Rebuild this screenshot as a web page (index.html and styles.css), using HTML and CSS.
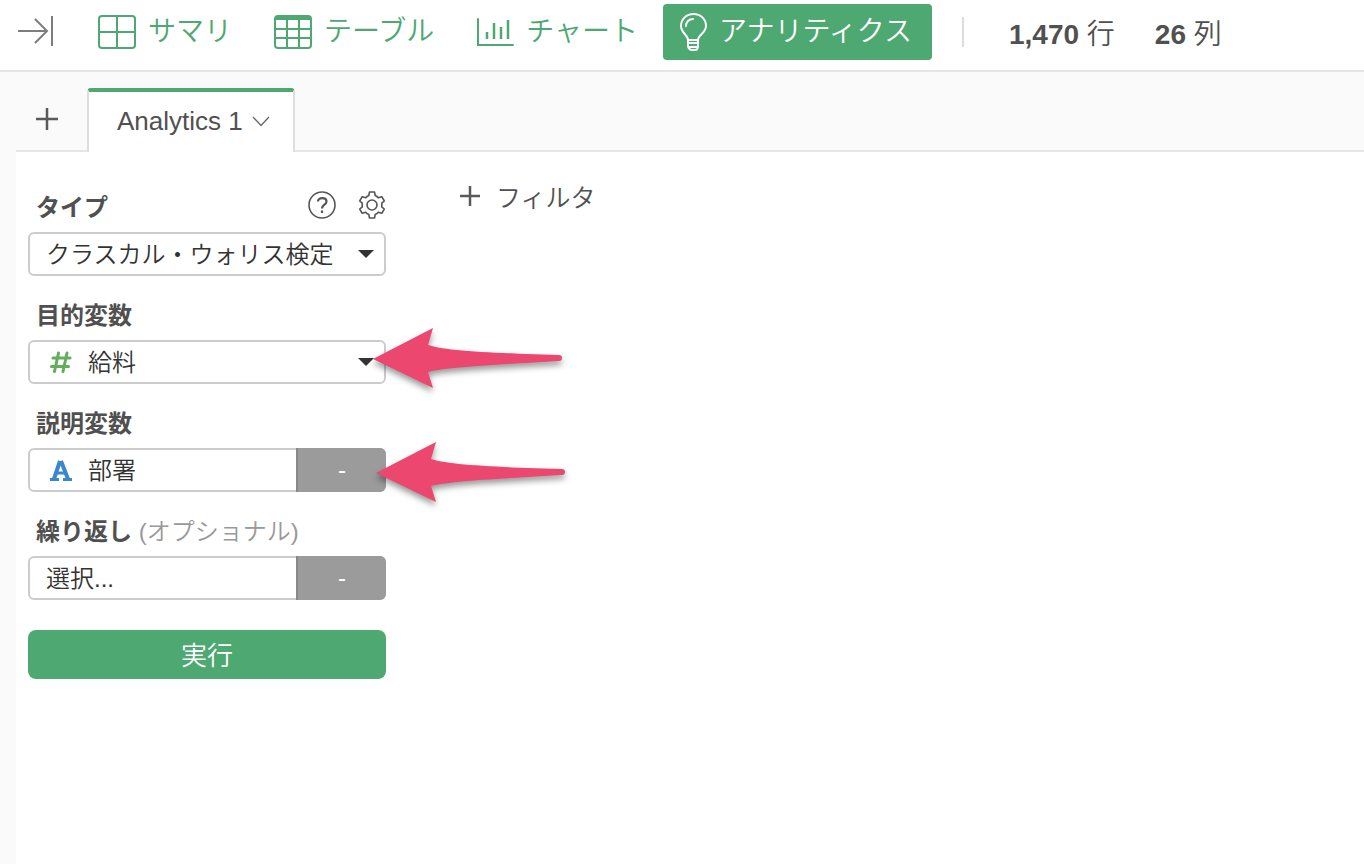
FILE: index.html
```html
<!DOCTYPE html>
<html lang="ja">
<head>
    <meta charset="UTF-8">
    <meta name="viewport" content="width=device-width, initial-scale=1.0">
    <title>アナリティクス</title>
    <link rel="stylesheet" href="styles.css">
</head>
<body>

    <header class="toolbar">
        <button type="button" class="icon-button" aria-label="expand">
            <svg width="36" height="32" viewBox="0 0 36 32" fill="none" stroke="#7d7d7d" stroke-width="2">
                <path d="M0 15H29M17 3L29 15L17 27M34 0V30"/>
            </svg>
        </button>
        <nav class="views">
            <button type="button" class="view">
                <svg width="38" height="34" viewBox="0 0 38 34" fill="none" stroke="#4da871" stroke-width="2">
                    <rect x="1" y="1" width="36" height="32" rx="3"/>
                    <path d="M19 1V33M1 17H37"/>
                </svg>
                サマリ
            </button>
            <button type="button" class="view">
                <svg width="38" height="34" viewBox="0 0 38 34" fill="none" stroke="#4da871" stroke-width="2">
                    <rect x="1" y="1" width="36" height="32" rx="3"/>
                    <path d="M1 3H37" stroke-width="4"/>
                    <path d="M13 4V33M25 4V33M1 14H37M1 23H37"/>
                </svg>
                テーブル
            </button>
            <button type="button" class="view">
                <svg width="38" height="30" viewBox="0 0 38 30" fill="none" stroke="#4da871" stroke-width="2">
                    <path d="M2 2V28H37" stroke-linecap="round"/>
                    <path d="M11 15V22M18 6V22M25 10V22M32 3V22" stroke-width="2.500"/>
                </svg>
                チャート
            </button>
            <button type="button" class="view active">
                <svg width="27" height="38" viewBox="0 0 27 38" fill="none" stroke="#fff" stroke-width="2" stroke-linecap="round" stroke-linejoin="round">
                    <path d="M8 27C8 22 1 20 1 13C1 6 6.500 1 13.500 1S26 6 26 13C26 20 18 22 18 27Z"/>
                    <path d="M6 13C6 9 9 6 13 6M8 27V33C8 35 10 37 12 37H15C17 37 18 35 18 33V27M8 30H18M9 34H18"/>
                </svg>
                アナリティクス
            </button>
        </nav>
        <div class="counts">
            <span><b>1,470</b> 行</span>
            <span><b>26</b> 列</span>
        </div>
    </header>

    <div class="workspace">
        <div class="tabs">
            <button type="button" class="add-tab" aria-label="add">
                <svg width="22" height="22" viewBox="0 0 22 22" stroke="#5a5a5a" stroke-width="2.500"><path d="M0 11H22M11 0V22"/></svg>
            </button>
            <button type="button" class="tab">
                Analytics 1
                <svg width="18" height="11" viewBox="0 0 18 11" fill="none" stroke="#666" stroke-width="1.300"><path d="M1 1L9 9.500L17 1"/></svg>
            </button>
        </div>

        <main class="content">
            <form class="settings">
                <div class="group">
                    <div class="label-row">
                        <label for="type">タイプ</label>
                        <button type="button" class="icon-button" aria-label="help">
                            <svg width="28" height="28" viewBox="0 0 28 28" fill="none" stroke="#555" stroke-width="1.600">
                                <circle cx="14" cy="14" r="13"/>
                                <path d="M10 10.500C10 6 18.500 6 18.500 10.500C18.500 14 14 13.500 14 17.500M14 19.500V22" stroke-width="2.200"/>
                            </svg>
                        </button>
                        <button type="button" class="icon-button" aria-label="settings">
                            <svg width="28" height="28" viewBox="0 0 28 28" fill="none" stroke="#555" stroke-width="1.600" stroke-linejoin="round">
                                <path d="M11.500 1H16.500L17.200 4.500Q19 5.300 20.300 6.800L23.800 5.700L26.300 10L23.700 12.200Q24.100 14 23.700 15.800L26.300 18L23.800 22.300L20.300 21.200Q19 22.700 17.200 23.500L16.500 27H11.500L10.800 23.500Q9 22.700 7.700 21.200L4.200 22.300L1.700 18L4.300 15.800Q3.900 14 4.300 12.200L1.700 10L4.200 5.700L7.700 6.800Q9 5.300 10.800 4.500Z"/>
                                <circle cx="14" cy="14" r="5"/>
                            </svg>
                        </button>
                    </div>
                    <div class="field">
                        <select id="type"><option>クラスカル・ウォリス検定</option></select>
                        <span class="caret"></span>
                    </div>
                </div>

                <div class="group">
                    <div class="label-row"><label for="target">目的変数</label></div>
                    <div class="field">
                        <svg class="type-icon" width="22" height="22" viewBox="0 0 22 22" fill="none" stroke="#63ad5b" stroke-width="3" stroke-linecap="round">
                            <path d="M8.500 2L4.500 20.500M17 2L13 20.500M3 7H20M1.500 15.500H18.500"/>
                        </svg>
                        <select id="target"><option>給料</option></select>
                        <span class="caret"></span>
                        <svg class="arrow" width="200" height="80" viewBox="0 0 200 80">
                            <path d="M2 35L62 4L57 21C76 27 120 29 188 31Q191 31 191 34Q191 37 188 37C120 41 76 43 57 48L62 64Z"/>
                        </svg>
                    </div>
                </div>

                <div class="group">
                    <div class="label-row"><label for="predictor">説明変数</label></div>
                    <div class="field">
                        <svg class="type-icon" width="22" height="22" viewBox="0 0 22 22" fill="none" stroke="#3a87cf">
                            <path d="M4 20L10 2M11 2L18 20" stroke-width="4"/>
                            <path d="M6 14H16M0 20.500H9M13 20.500H22" stroke-width="3"/>
                        </svg>
                        <select id="predictor"><option>部署</option></select>
                        <button type="button" class="option">-</button>
                        <svg class="arrow" width="200" height="80" viewBox="0 0 200 80">
                            <path d="M5 41L65 10L60 27C79 33 123 35 191 37Q194 37 194 40Q194 43 191 43C123 47 79 49 60 54L65 70Z"/>
                        </svg>
                    </div>
                </div>

                <div class="group">
                    <div class="label-row"><label for="repeat">繰り返し <span class="optional">(オプショナル)</span></label></div>
                    <div class="field">
                        <select id="repeat"><option>選択...</option></select>
                        <button type="button" class="option">-</button>
                    </div>
                </div>

                <button type="button" class="run">実行</button>
            </form>

            <button type="button" class="filter">
                <svg width="20" height="20" viewBox="0 0 20 20" stroke="#5a5a5a" stroke-width="2.500"><path d="M0 10H20M10 0V20"/></svg>
                フィルタ
            </button>
        </main>
    </div>

</body>
</html>
```
FILE: styles.css
```css
* {
    box-sizing: border-box;
}
body {
    margin: 0;
    min-height: 100vh;
    display: flex;
    flex-direction: column;
    font-family: "Liberation Sans", "Noto Sans CJK JP", sans-serif;
    font-weight: 350;
    color: #505050;
    background: #fff;
}
button, select {
    font: inherit;
    color: inherit;
    background: none;
    border: none;
    margin: 0;
    padding: 0;
}
button {
    cursor: pointer;
}
b {
    font-weight: 700;
}
svg {
    display: block;
    flex: none;
}

/* toolbar */
.toolbar {
    display: flex;
    align-items: center;
    height: 72px;
    padding: 0 18px 6px;
    border-bottom: 2px solid #e6e6e6;
    font-size: 28px;
    white-space: nowrap;
}
.views {
    display: flex;
    gap: 8px;
    margin-left: 27px;
}
.view {
    display: flex;
    align-items: center;
    gap: 12px;
    height: 56px;
    padding: 0 17px;
    border-radius: 4px;
    color: #4da871;
    line-height: 40px;
}
.view.active {
    padding-right: 20px;
    background: #4da871;
    color: #fff;
}
.counts {
    display: flex;
    align-items: center;
    gap: 40px;
    height: 30px;
    margin-left: 30px;
    padding-left: 45px;
    border-left: 2px solid #ddd;
}

/* tabs */
.workspace {
    flex: 1;
    display: flex;
    flex-direction: column;
    padding-left: 16px;
    background: #fafafa;
}
.tabs {
    display: flex;
    align-items: flex-end;
    height: 80px;
    border-bottom: 2px solid #e6e6e6;
}
.add-tab {
    width: 71px;
    height: 62px;
    padding-left: 20px;
}
.tab {
    display: flex;
    align-items: center;
    gap: 9px;
    height: 64px;
    margin-bottom: -2px;
    padding: 0 23px 2px 28px;
    border: 2px solid #ddd;
    border-top: 4px solid #4da871;
    border-bottom: none;
    border-radius: 4px 4px 0 0;
    background: #fff;
    font-size: 26px;
}

/* settings */
.content {
    flex: 1;
    display: flex;
    align-items: flex-start;
    gap: 74px;
    padding: 30px 12px;
    background: #fff;
}
.settings {
    display: flex;
    flex-direction: column;
    gap: 14px;
    width: 358px;
    font-size: 24px;
}
.label-row {
    display: flex;
    align-items: center;
    gap: 22px;
    height: 46px;
    margin-bottom: 4px;
    padding-left: 8px;
}
.label-row label {
    flex: 1;
    font-weight: bold;
}
.optional {
    font-weight: 350;
    color: #999;
}
.field {
    position: relative;
    display: flex;
    align-items: center;
    height: 44px;
    padding-left: 16px;
    border: 2px solid #ccc;
    border-radius: 6px;
    color: #333;
}
.field select {
    flex: 1;
    min-width: 0;
    height: 40px;
    appearance: none;
}
.type-icon {
    margin: 0 16px 0 4px;
}
.caret {
    margin-right: 10px;
    border: 8px solid transparent;
    border-top-color: #333;
    border-bottom: none;
}
.option {
    width: 90px;
    height: 44px;
    margin-right: -2px;
    border-left: 2px solid #888;
    border-radius: 0 6px 6px 0;
    background: #9b9b9b;
    color: #fff;
}
.arrow {
    position: absolute;
    left: 341px;
    top: -18px;
    fill: #ec476e;
    filter: drop-shadow(0 4px 3px rgba(0, 0, 0, 0.4));
    pointer-events: none;
}
.run {
    height: 49px;
    margin-top: 16px;
    padding-bottom: 2px;
    border-radius: 8px;
    background: #4da871;
    color: #fff;
    font-size: 26px;
}
.filter {
    display: flex;
    align-items: center;
    gap: 16px;
    height: 28px;
    font-size: 25px;
}
```
